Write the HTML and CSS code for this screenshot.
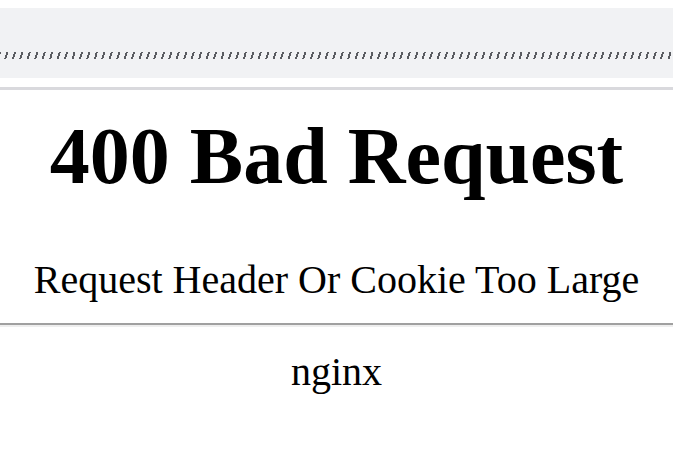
FILE: index.html
```html
<!DOCTYPE html>
<html>
<head>
<meta charset="utf-8">
<title>400 Request Header Or Cookie Too Large</title>
<link rel="stylesheet" href="styles.css">
</head>
<body>
<div class="bar"><div class="dashes"></div></div>
<div class="divider"></div>
<div class="page">
  <h1 class="title">400 Bad Request</h1>
  <div class="msg">Request Header Or Cookie Too Large</div>
  <hr class="rule">
  <div class="server">nginx</div>
</div>
</body>
</html>
```
FILE: styles.css
```css
html, body {
  margin: 0;
  padding: 0;
  background: #ffffff;
}
body {
  font-family: "Liberation Serif", "Times New Roman", serif;
  color: #000;
  overflow: hidden;
}
.bar {
  margin-top: 8px;
  height: 70px;
  background: #f1f2f4;
  display: flex;
  flex-direction: column;
  justify-content: flex-start;
  overflow: hidden;
}
.dashes {
  margin-top: 44px;
  height: 7px;
  margin-left: -2px;
  margin-right: -4px;
  background: repeating-linear-gradient(to right, #5a5c61 0 2px, transparent 2px 7.45px);
  transform: skewX(-18deg);
}
.divider {
  margin-top: 9px;
  height: 3px;
  background: #d9d9dd;
}
.page {
  font-size: 40px;
  text-align: center;
}
.title {
  font-size: 80px;
  font-weight: bold;
  margin: 21px 0 54px;
}
.msg {
  line-height: normal;
}
.rule {
  margin: 20px 0 21px;
  border: 0;
  height: 0;
  border-top: 2px solid #a0a0a0;
  border-bottom: 2px solid #eeeeee;
}
.server {
  line-height: normal;
}
```
